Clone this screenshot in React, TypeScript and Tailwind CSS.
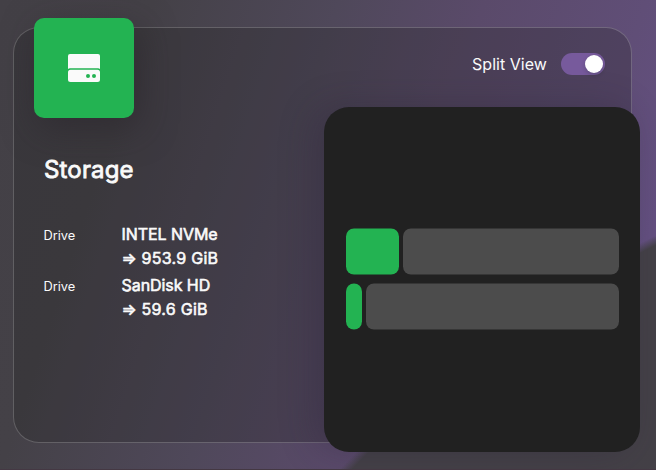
const drives = [
  { name: 'INTEL NVMe', size: '953.9 GiB', used: 53.3 },
  { name: 'SanDisk HD', size: '59.6 GiB', used: 15.8 },
];

function DriveIcon() {
  return (
    <svg width="32" height="28" viewBox="0 0 32 28" fill="#fafafa">
      <path d="M2 0h28a2 2 0 0 1 2 2v13a3.6 3.6 0 0 0-2-.7H2a3.6 3.6 0 0 0-2 .7V2a2 2 0 0 1 2-2z" />
      <path
        fillRule="evenodd"
        d="M2.5 15.800h27A2.5 2.5 0 0 1 32 18.300v7.200a2.500 2.500 0 0 1-2.500 2.500h-27A2.500 2.500 0 0 1 0 25.500v-7.200A2.500 2.500 0 0 1 2.500 15.800zM20 24a2 2 0 1 0 0-4 2 2 0 0 0 0 4zm6 0a2 2 0 1 0 0-4 2 2 0 0 0 0 4z"
      />
    </svg>
  );
}

export default function App() {
  return (
    <main className="h-[470px] w-[656px] overflow-hidden border-b border-[#443843] bg-[radial-gradient(circle_at_1145px_1226px,#443f47_0px,#444147_1096px,transparent_1105px),linear-gradient(108deg,#434046_0%,#444147_19%,#4f485a_42%,#5a4a6a_60%,#604e77_80%,#68528a_100%)] pt-[27px] pl-[13px] font-['Inter',sans-serif] text-[#fafafa]">
      <section className="flex h-[416px] w-[619px] items-start rounded-[26px] border border-white/20 bg-[#222020]/[0.27]">
        <div className="flex w-[310px] shrink-0 flex-col pl-5">
          <div className="-mt-2.5 flex size-[100px] shrink-0 items-center justify-center rounded-[10px] bg-[#23b352] shadow-[5px_10px_35px_rgba(40,34,42,0.5)]">
            <DriveIcon />
          </div>
          <h1 className="mt-9 ml-2.5 text-2xl leading-8 font-normal tracking-[0.16px] [-webkit-text-stroke:0.8px_#fafafa]">Storage</h1>
          <dl className="mt-9 ml-[9.500px] flex flex-col gap-[3px]">
            {drives.map((d) => (
              <div key={d.name} className="flex">
                <dt className="w-[78px] pt-[2px] text-[12.8px] leading-6">Drive</dt>
                <dd className="flex flex-col text-base leading-6 font-normal [-webkit-text-stroke:0.6px_#fafafa]">
                  <span className="tracking-[-0.06px]">{d.name}</span>
                  <span>
                    =&gt;<span className="tracking-[0.27px]"> {d.size}</span>
                  </span>
                </dd>
              </div>
            ))}
          </dl>
        </div>
        <div className="flex shrink-0 flex-col">
          <div className="flex h-[79px] w-[316px] items-center justify-end gap-3.5 pr-[35px] pb-[9px]">
            <span className="pt-0.5 text-base leading-6 tracking-[0.04px]">Split View</span>
            <span className="mt-px flex h-[22px] w-11 items-center justify-end rounded-full bg-[#775a9c] p-0.5">
              <span className="size-[18px] rounded-full bg-white shadow-[0_2px_4px_rgba(0,35,11,0.2)]" />
            </span>
          </div>
          <div className="flex h-[345px] w-[316px] shrink-0 flex-col justify-center gap-[9px] rounded-[25px] bg-[#212121] px-[22px] shadow-[-10px_0_35px_rgba(40,34,55,0.3)]">
            {drives.map((d) => (
              <div key={d.name} className="flex h-[46px] w-[273px] -translate-y-[0.5px] gap-1">
                <div className="shrink-0 rounded-lg bg-[#23b352]" style={{ width: d.used }} />
                <div className="flex-1 rounded-lg bg-[#4c4c4c]" />
              </div>
            ))}
          </div>
        </div>
      </section>
    </main>
  );
}
